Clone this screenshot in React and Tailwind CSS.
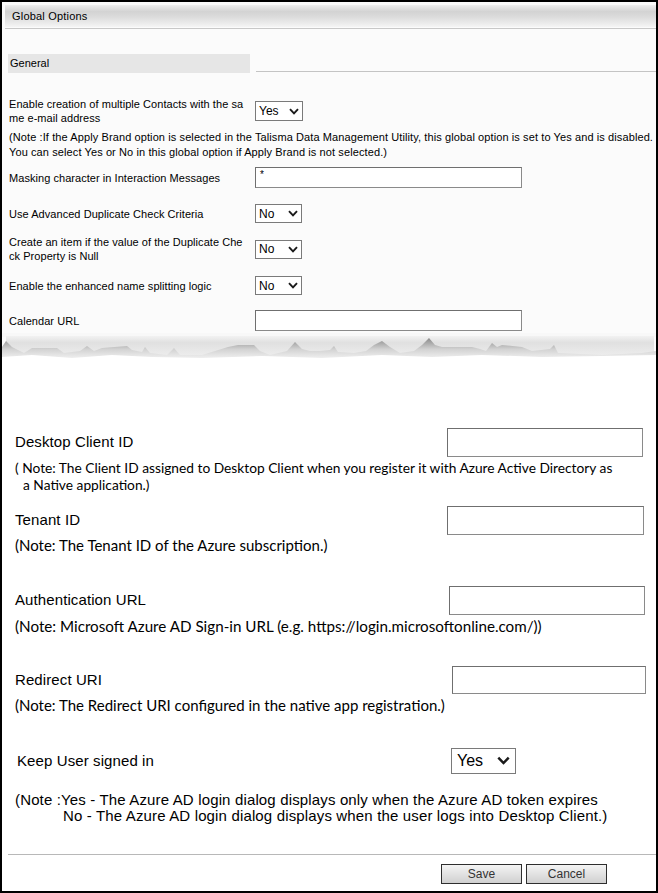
import React from 'react';

const topFont = "font-['Liberation_Sans',Arial,sans-serif]";
const noteFont = "font-['Lato','Open_Sans',sans-serif]";

const Chevron = ({ size = 10 }) => (
  <svg width={size} height={size * 0.7} viewBox="0 0 10 7" className="shrink-0">
    <polyline points="1,1.2 5,5.4 9,1.2" fill="none" stroke="#1a1a1a" strokeWidth="1.9" />
  </svg>
);

const Select = ({ value, className = '', big = false }) => (
  <div
    className={`flex items-center justify-between border border-[#7a7a7a] bg-white ${
      big ? 'pl-[5px] pr-[5px] text-[16px]' : 'pl-[3px] pr-[3px] text-[12px]'
    } ${className}`}
  >
    <span>{value}</span>
    <Chevron size={big ? 13 : 10} />
  </div>
);

const TextBox = ({ className = '', value = '' }) => (
  <div className={`border border-[#8a8a8a] border-t-[#6f6f6f] border-l-[#6f6f6f] bg-white text-[10px] pl-[4px] leading-[14px] ${className}`}>
    {value}
  </div>
);

const TopRow = ({ label, children, className = '' }) => (
  <div className={`flex items-center ${className}`}>
    <div className="w-[253px] pl-[7px] leading-[14px] tracking-[0.05px] whitespace-nowrap">{label}</div>
    {children}
  </div>
);

const TornEdge = () => (
  <svg width="654" height="34" viewBox="0 0 654 34" className="block">
    <defs>
      <linearGradient id="band" x1="0" y1="0" x2="0" y2="1">
        <stop offset="0" stopColor="#f2f2f2" />
        <stop offset="0.35" stopColor="#e0e0e0" />
        <stop offset="1" stopColor="#ececec" />
      </linearGradient>
      <linearGradient id="rock" x1="0" y1="0" x2="0" y2="1">
        <stop offset="0" stopColor="#8a8a8a" />
        <stop offset="0.45" stopColor="#d2d2d2" />
        <stop offset="1" stopColor="#ffffff" />
      </linearGradient>
    </defs>
    <rect x="0" y="0" width="654" height="4" fill="#f8f8f8" />
    <rect x="4" y="3" width="648" height="19" fill="url(#band)" />
    <path
      d="M0,30 L0,14 L4,8 L10,14 L22,20 L30,15 L55,15 L62,20 L78,18 L85,13 L92,18 L100,15 L125,13 L130,17 L140,19 L143,14 L148,20 L165,22 L172,15 L178,22 L200,22 L226,14 L236,12 L252,12 L258,18 L268,22 L285,18 L293,9 L300,16 L308,18 L318,18 L328,17 L332,13 L336,19 L352,20 L364,18 L372,12 L380,8 L388,14 L398,20 L412,18 L420,12 L427,5 L433,12 L440,14 L470,14 L478,16 L484,18 L490,10 L495,14 L500,12 L520,14 L530,18 L548,16 L552,12 L556,20 L600,22 L640,20 L654,18 L654,30 Z"
      fill="url(#rock)"
    />
    <path
      d="M0,34 L0,24 L30,22 L70,25 L110,22 L150,24 L200,25 L260,23 L320,25 L380,22 L430,24 L480,22 L540,24 L600,23 L654,22 L654,34 Z"
      fill="#ffffff"
    />
  </svg>
);

const BottomField = ({ label, note, inputClass, noteClass = 'mt-[2px] text-[15px]', className = '' }) => (
  <div className={className}>
    <div className="flex items-center justify-between">
      <div className="pl-[13px] text-[15px] tracking-[0.1px]">{label}</div>
      <TextBox className={inputClass} />
    </div>
    <div className={`${noteFont} pl-[13px] leading-[17px] text-black ${noteClass}`}>{note}</div>
  </div>
);

export default function App() {
  return (
    <div className="w-[658px] h-[893px] bg-black p-[2px]">
      <div className={`w-[654px] h-[889px] bg-[#fbfbfb] ${topFont} text-[11px] text-black flex flex-col overflow-hidden`}>
        {/* header */}
        <div className="pt-[3px] pl-[3px]">
          <div className="h-[22px] bg-[linear-gradient(to_bottom,#efefef_0%,#d3d3d3_30%,#dcdcdc_55%,#ececec_85%,#f5f5f5_100%)] flex items-center pl-[7px] text-[11px] tracking-[0.2px]">
            Global Options
          </div>
          <div className="h-[1px] mt-[1px] bg-[#c8c8c8]" />
        </div>

        {/* General */}
        <div className="mt-[25px] flex items-end">
          <div className="ml-[6px] w-[242px] h-[19px] bg-[#e6e6e6] flex items-center pl-[2px] text-[11px]">
            General
          </div>
          <div className="ml-[6px] flex-1 h-[1px] mb-[1px] bg-[#c4c4c4]" />
        </div>

        <TopRow
          className="mt-[24px]"
          label={<>Enable creation of multiple Contacts with the sa<br />me e-mail address</>}
        >
          <Select value="Yes" className="w-[48px] h-[20px]" />
        </TopRow>

        <div className="mt-[5px] pl-[7px] leading-[15px] whitespace-nowrap tracking-[0.1px]">
          (Note :If the Apply Brand option is selected in the Talisma Data Management Utility, this global option is set to Yes and is disabled.
          <br />
          You can select Yes or No in this global option if Apply Brand is not selected.)
        </div>

        <TopRow className="mt-[7px]" label="Masking character in Interaction Messages">
          <TextBox className="w-[267px] h-[21px]" value="*" />
        </TopRow>

        <TopRow className="mt-[16px]" label="Use Advanced Duplicate Check Criteria">
          <Select value="No" className="w-[47px] h-[19px]" />
        </TopRow>

        <TopRow
          className="mt-[12px]"
          label={<>Create an item if the value of the Duplicate Che<br />ck Property is Null</>}
        >
          <Select value="No" className="w-[47px] h-[19px]" />
        </TopRow>

        <TopRow className="mt-[13px]" label="Enable the enhanced name splitting logic">
          <Select value="No" className="w-[47px] h-[19px]" />
        </TopRow>

        <TopRow className="mt-[15px]" label="Calendar URL">
          <TextBox className="w-[267px] h-[21px]" />
        </TopRow>

        <div className="mt-[2px]">
          <TornEdge />
        </div>

        {/* lower section */}
        <div className="flex-1 bg-white pt-[61px]">
          <BottomField
            label="Desktop Client ID"
            inputClass="w-[196px] h-[29px] mr-[13px]"
            noteClass="mt-[2px] text-[13.75px]"
            note={
              <>
                ( Note: The Client ID assigned to Desktop Client when you register it with Azure Active Directory as
                <br />
                <span className="pl-[8px]">a Native application.)</span>
              </>
            }
          />
          <BottomField
            className="mt-[13px]"
            label="Tenant ID"
            inputClass="w-[197px] h-[29px] mr-[12px]"
            note="(Note: The Tenant ID of the Azure subscription.)"
          />
          <BottomField
            className="mt-[32px]"
            label="Authentication URL"
            inputClass="w-[196px] h-[29px] mr-[11px]"
            noteClass="mt-[3px] text-[15.2px]"
            note="(Note: Microsoft Azure AD Sign-in URL (e.g. https://login.microsoftonline.com/))"
          />
          <BottomField
            className="mt-[31px]"
            label="Redirect URI"
            inputClass="w-[194px] h-[28px] mr-[10px]"
            noteClass="mt-[3px] text-[15px]"
            note="(Note: The Redirect URI configured in the native app registration.)"
          />

          <div className="mt-[34px] flex items-center">
            <div className="w-[449px] pl-[15px] text-[15px] tracking-[0.1px]">Keep User signed in</div>
            <Select value="Yes" big className="w-[65px] h-[26px]" />
          </div>

          <div className="mt-[18px] pl-[13px] text-[15px] leading-[16px] tracking-[0.15px]">
            (Note :Yes - The Azure AD login dialog displays only when the Azure AD token expires
            <br />
            <span className="pl-[48px]">No - The Azure AD login dialog displays when the user logs into Desktop Client.)</span>
          </div>

          <div className="mt-[30px] ml-[6px] h-[1px] bg-[#b8b8b8]" />

          <div className="mt-[9px] flex gap-[4px] pl-[439px]">
            <button className="w-[81px] h-[20px] border border-[#2e2e2e] bg-[linear-gradient(to_bottom,#f4f4f4,#d0d0d0)] text-[12px] text-[#333]">
              Save
            </button>
            <button className="w-[81px] h-[20px] border border-[#2e2e2e] bg-[linear-gradient(to_bottom,#f4f4f4,#d0d0d0)] text-[12px] text-[#333]">
              Cancel
            </button>
          </div>
        </div>
      </div>
    </div>
  );
}
